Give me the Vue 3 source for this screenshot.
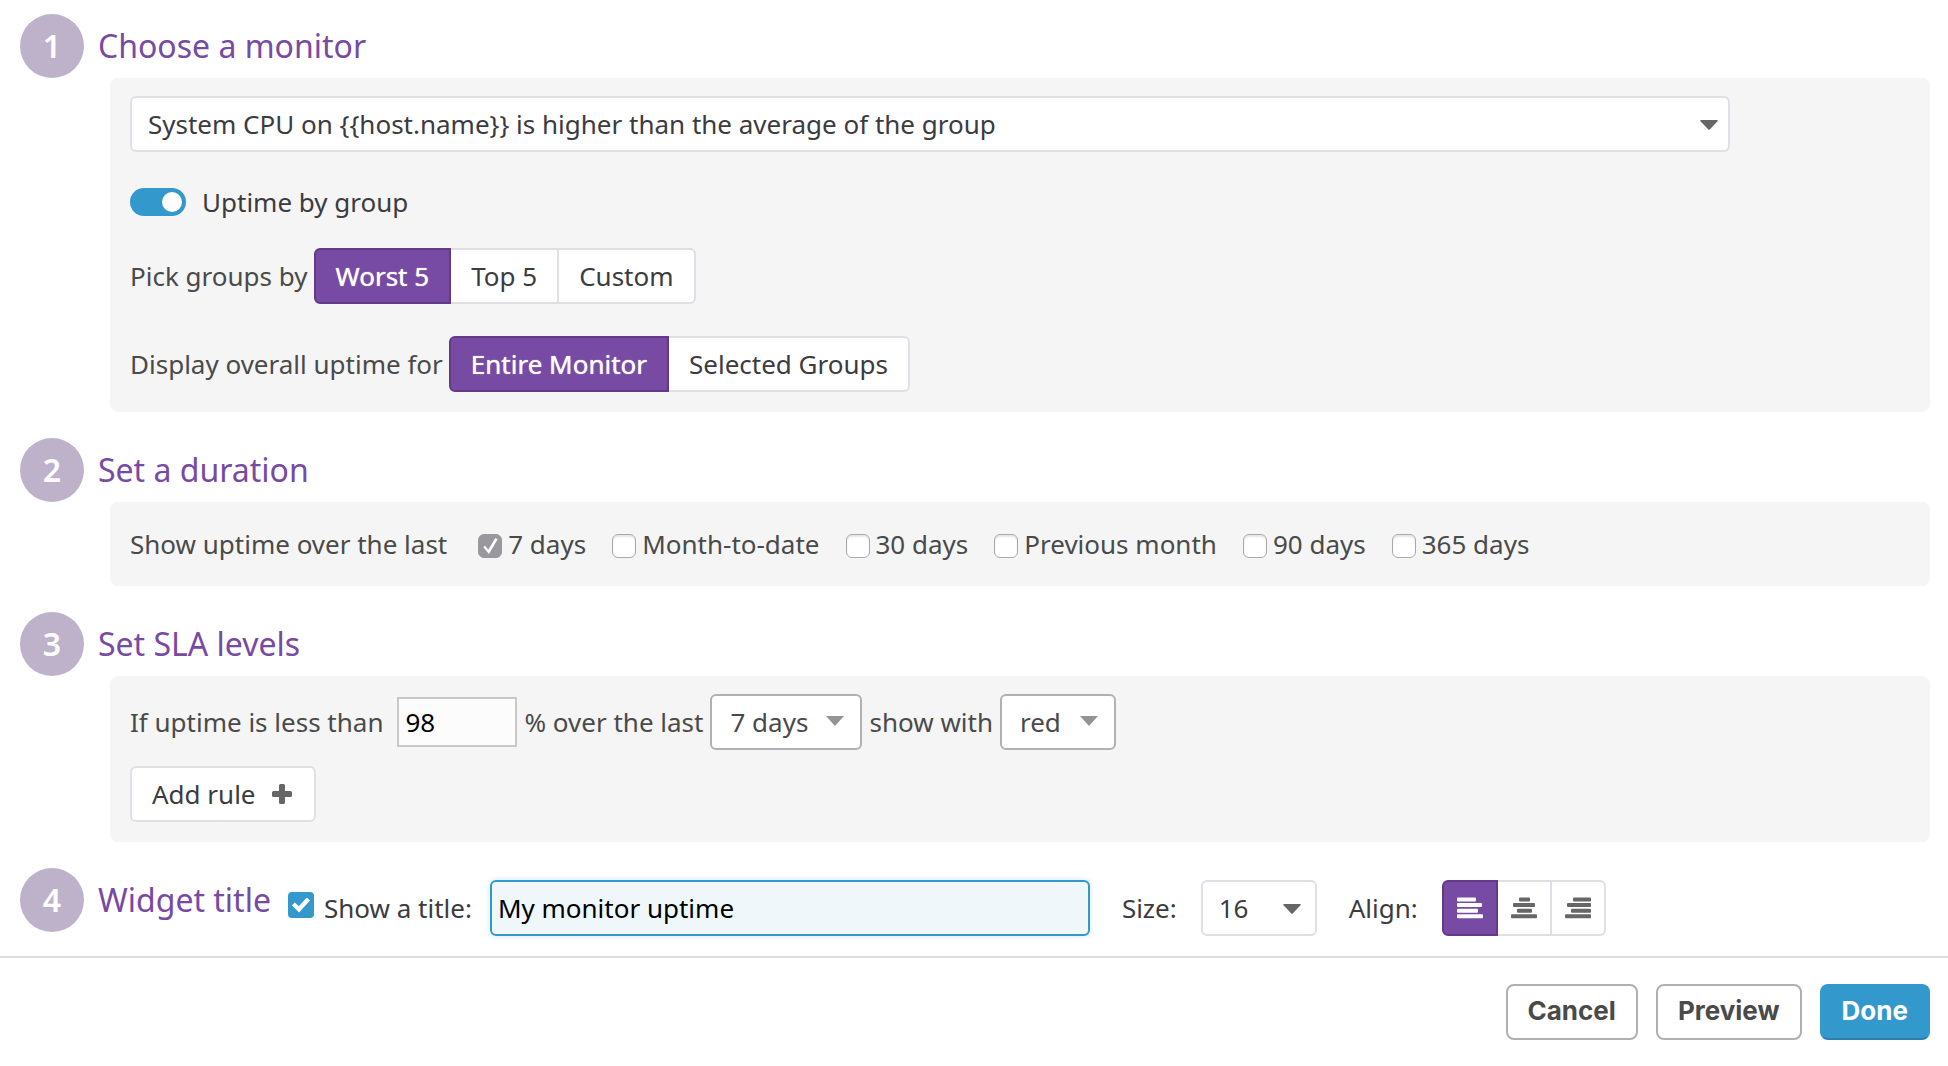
<script setup>
import { ref } from 'vue'

const groupPicks = ['Worst 5', 'Top 5', 'Custom']
const groupPick = ref('Worst 5')
const scopes = ['Entire Monitor', 'Selected Groups']
const scope = ref('Entire Monitor')
const durations = ['7 days', 'Month-to-date', '30 days', 'Previous month', '90 days', '365 days']
const chosen = ref(['7 days'])
const monitors = ['System CPU on {{host.name}} is higher than the average of the group']
const monitor = ref(monitors[0])
const byGroup = ref(true)
const threshold = ref('98')
const showTitle = ref(true)
const title = ref('My monitor uptime')
const align = ref('left')
const aligns = [
  { name: 'left', bars: [[0, 19], [0, 25], [0, 21], [0, 26]] },
  { name: 'center', bars: [[8, 11], [2, 22], [6, 15], [0, 26]] },
  { name: 'right', bars: [[8, 18], [2, 24], [6, 20], [0, 26]] },
]
</script>

<template>
  <form class="editor" @submit.prevent>
    <section class="step">
      <header class="head">
        <span class="num">1</span>
        <h2>Choose a monitor</h2>
      </header>
      <div class="panel">
        <div class="select monitor">
          <select v-model="monitor" aria-label="Monitor">
            <option v-for="m in monitors" :key="m">{{ m }}</option>
          </select>
          <svg class="caret" viewBox="0 0 18 10"><path d="M1 0h16q1.500 0 .5 1.300L9.700 9.500q-.7.700-1.400 0L.5 1.300Q-.5 0 1 0z" /></svg>
        </div>
        <label class="toggle">
          <input v-model="byGroup" type="checkbox" role="switch" />
          Uptime by group
        </label>
        <div class="row picks">
          <span>Pick groups by</span>
          <div class="group" role="group" aria-label="Pick groups by">
            <button v-for="p in groupPicks" :key="p" type="button" :class="{ on: p === groupPick }" :aria-pressed="p === groupPick" @click="groupPick = p">{{ p }}</button>
          </div>
        </div>
        <div class="row">
          <span>Display overall uptime for</span>
          <div class="group" role="group" aria-label="Display overall uptime for">
            <button v-for="s in scopes" :key="s" type="button" :class="{ on: s === scope }" :aria-pressed="s === scope" @click="scope = s">{{ s }}</button>
          </div>
        </div>
      </div>
    </section>

    <section class="step">
      <header class="head">
        <span class="num">2</span>
        <h2>Set a duration</h2>
      </header>
      <div class="panel durations">
        <span class="lead">Show uptime over the last</span>
        <label v-for="d in durations" :key="d" class="tick">
          <input v-model="chosen" type="checkbox" :value="d" />
          {{ d }}
        </label>
      </div>
    </section>

    <section class="step">
      <header class="head">
        <span class="num">3</span>
        <h2>Set SLA levels</h2>
      </header>
      <div class="panel">
        <div class="row rule">
          <label for="threshold">If uptime is less than</label>
          <input id="threshold" v-model="threshold" class="threshold" type="text" />
          <label for="window">% over the last</label>
          <div class="select dark window">
            <select id="window"><option>7 days</option></select>
            <svg class="caret" viewBox="0 0 18 10"><path d="M0 0h18L9 10z" /></svg>
          </div>
          <label for="color">show with</label>
          <div class="select dark color">
            <select id="color"><option>red</option></select>
            <svg class="caret" viewBox="0 0 18 10"><path d="M0 0h18L9 10z" /></svg>
          </div>
        </div>
        <button type="button" class="add">
          Add rule
          <svg viewBox="0 0 20 20"><path d="M8.500 0h3Q13 0 13 1.500V7h5.500Q20 7 20 8.500v3q0 1.500-1.500 1.500H13v5.500q0 1.500-1.500 1.500h-3Q7 20 7 18.500V13H1.500Q0 13 0 11.500v-3Q0 7 1.500 7H7V1.500Q7 0 8.500 0z" /></svg>
        </button>
      </div>
    </section>

    <section class="step last">
      <header class="head">
        <span class="num">4</span>
        <h2>Widget title</h2>
      </header>
      <div class="options">
        <label class="show">
          <input v-model="showTitle" type="checkbox" />
          Show a title:
        </label>
        <input v-model="title" class="title" type="text" aria-label="Title" />
        <label for="size">Size:</label>
        <div class="select size">
          <select id="size"><option>16</option></select>
          <svg class="caret" viewBox="0 0 18 10"><path d="M1 0h16q1.500 0 .5 1.300L9.700 9.500q-.7.700-1.400 0L.5 1.300Q-.5 0 1 0z" /></svg>
        </div>
        <span class="align-label">Align:</span>
        <div class="group icons" role="group" aria-label="Align">
          <button v-for="a in aligns" :key="a.name" type="button" :class="{ on: a.name === align }" :aria-pressed="a.name === align" :aria-label="a.name" @click="align = a.name">
            <svg viewBox="0 0 26 22">
              <rect v-for="(b, i) in a.bars" :key="i" :x="b[0]" :y="i * 5.6 + 0.5" :width="b[1]" height="4" rx="1" />
            </svg>
          </button>
        </div>
      </div>
    </section>

    <footer class="actions">
      <button type="button">Cancel</button>
      <button type="button">Preview</button>
      <button type="submit" class="done">Done</button>
    </footer>
  </form>
</template>

<style>
body {
  margin: 0;
  background: #fff;
}
</style>

<style scoped>
.editor,
.editor * {
  box-sizing: border-box;
}
.editor {
  padding-top: 14px;
  font: 26px/36px "Noto Sans", "Open Sans", sans-serif;
  color: #4a4a4a;
}
button,
input,
select {
  margin: 0;
  font: inherit;
  color: inherit;
}
.step {
  margin: 0 18px 26px 20px;
}
.head {
  display: flex;
  align-items: center;
  gap: 14px;
}
.num {
  display: grid;
  place-items: center;
  width: 64px;
  height: 64px;
  border-radius: 50%;
  background: #beb2cb;
  color: #fff;
  font-size: 32px;
  font-weight: 600;
}
h2 {
  margin: 0;
  font-size: 32px;
  line-height: 44px;
  font-weight: 400;
  color: #774aa4;
  white-space: nowrap;
}
.panel {
  margin-left: 90px;
  padding: 18px 20px 20px;
  border-radius: 8px;
  background: #f5f5f5;
}
.select {
  position: relative;
  height: 56px;
}
.select select {
  appearance: none;
  width: 100%;
  height: 100%;
  padding: 0 16px;
  border: 2px solid #dfdfe5;
  border-radius: 6px;
  background: #fff;
  color: #3b3b40;
}
.caret {
  position: absolute;
  top: 24px;
  right: 12px;
  width: 18px;
  height: 10px;
  fill: #666;
  pointer-events: none;
}
.monitor {
  max-width: 1600px;
}
.toggle {
  display: flex;
  align-items: center;
  gap: 16px;
  width: max-content;
  margin: 32px 0 28px;
  color: #3b3b40;
}
.toggle input {
  appearance: none;
  display: flex;
  justify-content: flex-end;
  width: 56px;
  height: 28px;
  padding: 4px;
  border-radius: 14px;
  background: #3399cc;
}
.toggle input::after {
  content: "";
  width: 20px;
  height: 20px;
  border-radius: 50%;
  background: #fff;
}
.row {
  display: flex;
  align-items: center;
  gap: 6px;
}
.picks {
  margin-bottom: 32px;
}
.group {
  display: flex;
}
.group button {
  height: 56px;
  padding: 0 20px;
  border: 2px solid #dfdfe5;
  border-left-width: 0;
  background: #fff;
  color: #3b3b40;
}
.group button.on {
  border: 2px solid #613b87;
  background: #774aa4;
  color: #fff;
  text-shadow: 0 0 1px #fff;
}
.group button:first-child {
  border-radius: 6px 0 0 6px;
}
.group button:last-child {
  border-radius: 0 6px 6px 0;
}
.durations {
  display: flex;
  align-items: center;
  gap: 26px;
  padding: 24px 20px;
}
.lead {
  margin-right: 5px;
}
.tick {
  display: flex;
  align-items: center;
  gap: 6px;
}
.tick input {
  appearance: none;
  display: grid;
  place-items: center;
  width: 24px;
  height: 24px;
  margin-top: 4px;
  border: 1px solid #a9a9ab;
  border-radius: 6px;
  background: #fff;
  box-shadow: inset 0 2px 2px #e6e6e6;
}
.tick input:checked {
  border-color: #98989d;
  background: #98989d;
  box-shadow: none;
}
.tick input:checked::after {
  content: "";
  width: 16px;
  height: 16px;
  background: #fff;
  clip-path: polygon(6% 56%, 18% 48%, 38% 74%, 82% 0, 96% 8%, 42% 100%);
}
.threshold {
  width: 120px;
  height: 50px;
  margin-left: 7px;
  padding: 0 6px;
  border: 2px solid #c8c8c8;
  background: #fcfcfc;
  color: #000;
}
.dark select {
  padding: 0 18px;
  border-color: #b0b0b5;
  color: #4a4a4a;
}
.dark .caret {
  top: 22px;
  right: 18px;
  fill: #949494;
}
.rule {
  gap: 7px;
}
.window {
  width: 152px;
}
.color {
  width: 116px;
}
.add {
  display: flex;
  align-items: center;
  gap: 16px;
  height: 56px;
  margin-top: 16px;
  padding: 0 22px 0 20px;
  border: 2px solid #dfdfe5;
  border-radius: 6px;
  background: #fff;
  color: #3b3b40;
}
.add svg {
  width: 20px;
  height: 20px;
  fill: #666;
}
.last {
  display: flex;
  align-items: flex-start;
  margin-bottom: 0;
  padding-bottom: 20px;
}
.options {
  display: flex;
  align-items: center;
  margin: 12px 0 0 17px;
  color: #3b3b40;
}
.show {
  display: flex;
  align-items: center;
  gap: 10px;
}
.show input {
  appearance: none;
  display: grid;
  place-items: center;
  width: 26px;
  height: 26px;
  margin-bottom: 6px;
  border-radius: 4px;
  background: #3399cc;
}
.show input::after {
  content: "";
  width: 18px;
  height: 15px;
  background: #fff;
  clip-path: polygon(0 54%, 16% 34%, 38% 58%, 82% 0, 100% 20%, 40% 100%);
}
.title {
  flex: 0 1 600px;
  width: 600px;
  height: 56px;
  margin: 0 32px 0 18px;
  padding: 0 6px;
  border: 2px solid #3399cc;
  border-radius: 6px;
  background: #eff7fb;
  box-shadow: 0 0 6px #cfe6f2;
  color: #000;
}
.size {
  width: 116px;
  margin: 0 32px 0 24px;
}
.size .caret {
  right: 16px;
}
.align-label {
  margin-right: 24px;
}
.icons button {
  display: grid;
  place-items: center;
  padding: 0 13px;
}
.icons svg {
  width: 26px;
  height: 22px;
  fill: #666;
}
.icons .on svg {
  fill: #fff;
}
.actions {
  display: flex;
  justify-content: flex-end;
  gap: 18px;
  padding: 26px 18px;
  border-top: 2px solid #dcdcdc;
}
.actions button {
  height: 56px;
  padding: 0 20px 2px;
  border: 2px solid #b0b0b0;
  border-radius: 8px;
  background: #fff;
  color: #4a4a4a;
  font-family: Inter, "Liberation Sans", sans-serif;
  font-weight: 700;
}
.actions .done {
  border-color: #3399cc;
  border-bottom-color: #2a7fab;
  background: #3399cc;
  color: #fff;
}
</style>
